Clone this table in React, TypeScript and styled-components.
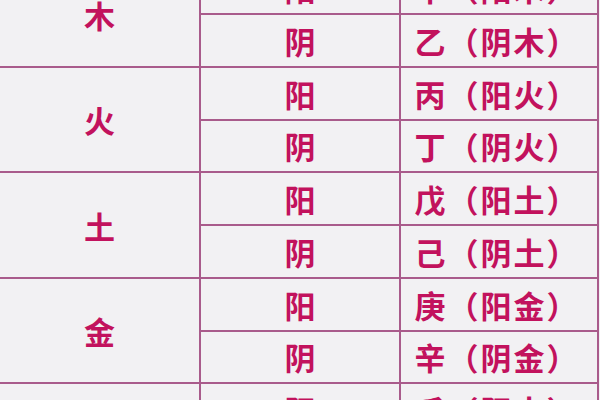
import React from "react";
import styled, { createGlobalStyle } from "styled-components";

const GlobalStyle = createGlobalStyle`
  html, body {
    margin: 0;
    padding: 0;
    background: #f2f1f3;
  }
  body {
    font-family: "Noto Sans CJK SC", "Noto Sans", sans-serif;
  }
`;

interface Stem {
  polarity: string;
  label: string;
}

interface ElementGroup {
  element: string;
  stems: Stem[];
}

const groups: ElementGroup[] = [
  {
    element: "木",
    stems: [
      { polarity: "阳", label: "甲（阳木）" },
      { polarity: "阴", label: "乙（阴木）" },
    ],
  },
  {
    element: "火",
    stems: [
      { polarity: "阳", label: "丙（阳火）" },
      { polarity: "阴", label: "丁（阴火）" },
    ],
  },
  {
    element: "土",
    stems: [
      { polarity: "阳", label: "戊（阳土）" },
      { polarity: "阴", label: "己（阴土）" },
    ],
  },
  {
    element: "金",
    stems: [
      { polarity: "阳", label: "庚（阳金）" },
      { polarity: "阴", label: "辛（阴金）" },
    ],
  },
  {
    element: "水",
    stems: [
      { polarity: "阳", label: "壬（阳水）" },
      { polarity: "阴", label: "癸（阴水）" },
    ],
  },
];

const Viewport = styled.div`
  width: 600px;
  height: 400px;
  overflow: hidden;
`;

const Table = styled.div`
  width: 597px;
  margin-top: -37.75px;
  display: grid;
  grid-template-columns: 199px 198px 196px;
  grid-auto-rows: 50.75px;
  gap: 2px;
  padding-right: 2px;
  background: #a95b8b;
`;

const Cell = styled.div<{ $span?: number; $column?: number }>`
  grid-row: ${({ $span }) => ($span ? `span ${$span}` : "auto")};
  grid-column: ${({ $column }) => ($column ? $column : "auto")};
  display: flex;
  align-items: center;
  justify-content: center;
  background: #f2f1f3;
  color: #c2125d;
  font-size: 31px;
  font-weight: 700;
  line-height: 1;
  white-space: nowrap;
`;

const StemCell = styled(Cell)`
  letter-spacing: 2px;
  padding-right: 4px;
`;

export default function App(): React.JSX.Element {
  return (
    <>
      <GlobalStyle />
      <Viewport>
        <Table>
          {groups.map((group) => (
            <React.Fragment key={group.element}>
              <Cell $span={2} $column={1}>
                {group.element}
              </Cell>
              {group.stems.map((stem) => (
                <React.Fragment key={stem.label}>
                  <Cell $column={2}>{stem.polarity}</Cell>
                  <StemCell $column={3}>{stem.label}</StemCell>
                </React.Fragment>
              ))}
            </React.Fragment>
          ))}
        </Table>
      </Viewport>
    </>
  );
}
